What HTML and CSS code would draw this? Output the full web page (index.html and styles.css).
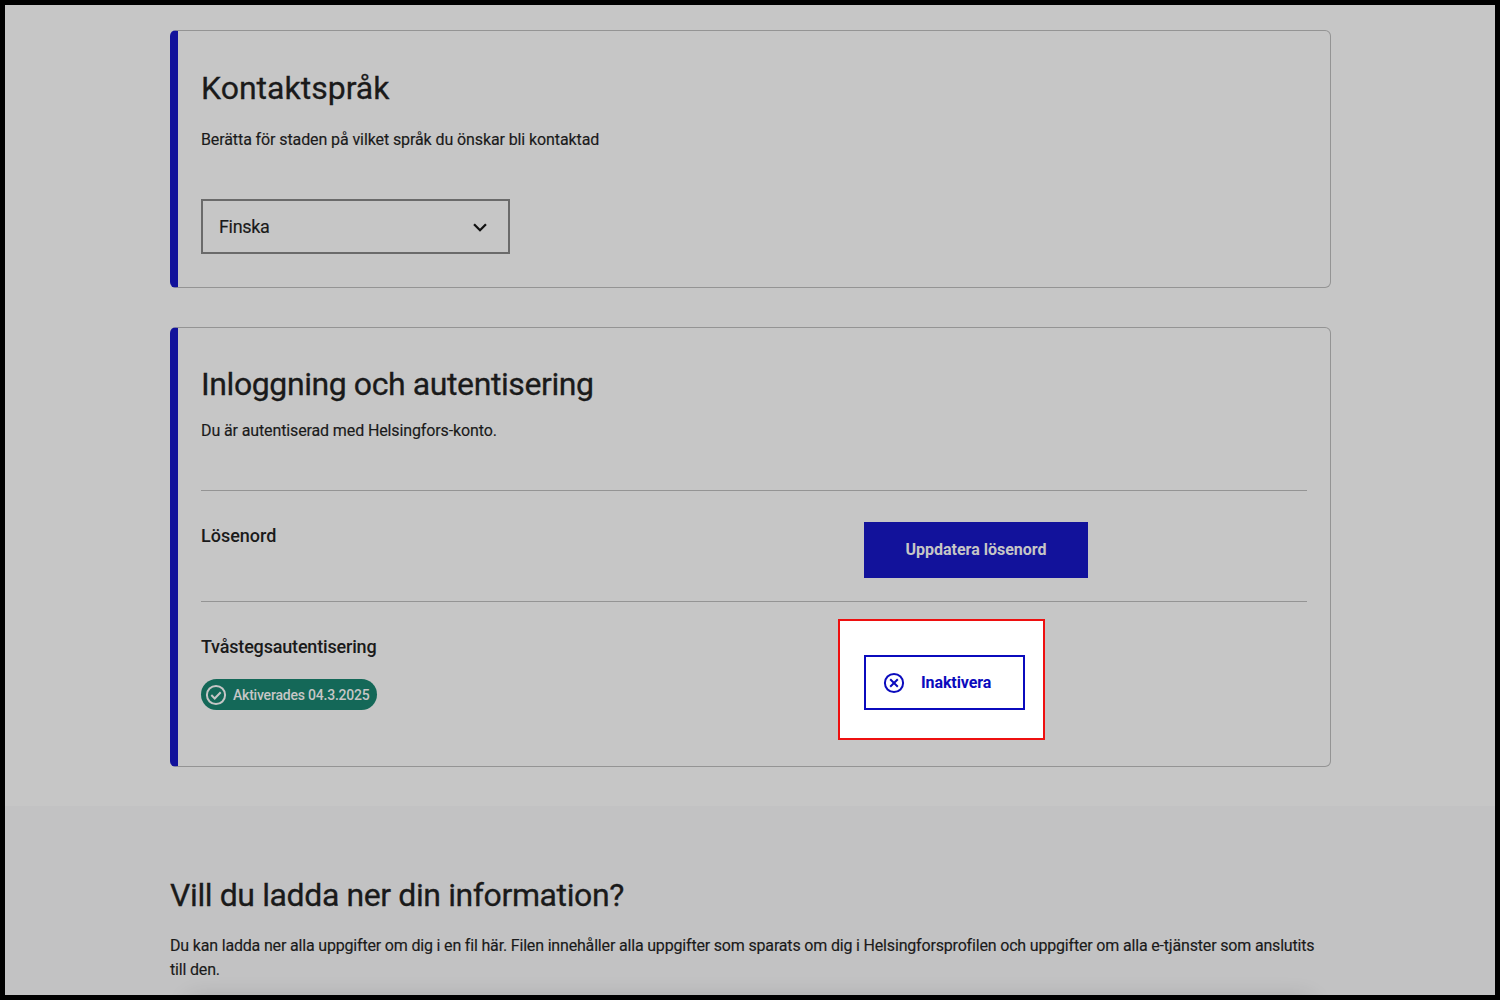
FILE: index.html
```html
<!DOCTYPE html>
<html lang="sv">
<head>
<meta charset="utf-8">
<title>Helsingforsprofil</title>
<link rel="stylesheet" href="styles.css">
</head>
<body>
<main class="profile">
  <section class="card card-language">
    <h2 class="title title-language">Kontaktspråk</h2>
    <p class="text text-language">Berätta för staden på vilket språk du önskar bli kontaktad</p>
    <div class="select" role="combobox" aria-expanded="false">
      <span class="select-value">Finska</span>
      <svg class="chevron" viewBox="0 0 24 24"><path d="M5.5 9l6.500 6.500L18.500 9"/></svg>
    </div>
  </section>
  <section class="card card-login">
    <h2 class="title title-login">Inloggning och autentisering</h2>
    <p class="text text-login">Du är autentiserad med Helsingfors-konto.</p>
    <div class="row">
      <h3 class="label label-password">Lösenord</h3>
      <div class="action"><button class="btn btn-primary"><span class="btn-update">Uppdatera lösenord</span></button></div>
    </div>
    <div class="row">
      <div>
        <h3 class="label label-twostep">Tvåstegsautentisering</h3>
        <div class="badge">
          <svg class="badge-icon" viewBox="0 0 22 22"><circle cx="11" cy="11" r="9.100"/><path d="M6.300 11l3.400 3.500 6-6.300"/></svg>
          <span class="badge-text">Aktiverades 04.3.2025</span>
        </div>
      </div>
      <div class="action action-highlight">
        <div class="highlight"></div>
        <button class="btn btn-secondary">
          <svg class="cancel-icon" viewBox="0 0 22 22"><circle cx="11" cy="11" r="9.100"/><path d="M7.200 7.200l7.600 7.600M14.800 7.200l-7.600 7.600"/></svg>
          <span class="btn-disable">Inaktivera</span>
        </button>
      </div>
    </div>
  </section>
</main>
<section class="download">
  <h2 class="title title-download">Vill du ladda ner din information?</h2>
  <p class="text text-download"><span class="line-first">Du kan ladda ner alla uppgifter om dig i en fil här. Filen innehåller alla uppgifter som sparats om dig i Helsingforsprofilen och uppgifter om alla e-tjänster som anslutits</span> <span class="line-last">till den.</span></p>
  <div class="sheet-shadow"></div>
</section>
</body>
</html>
```
FILE: styles.css
```css
* { box-sizing: border-box; }
body {
  margin: 0;
  width: 1500px;
  height: 1000px;
  border: 5px solid #000;
  background: #c6c6c6;
  color: #1a1a1a;
  font-family: Roboto, "Liberation Sans", sans-serif;
  overflow: hidden;
}
h2, h3, p { margin: 0; }
.profile {
  height: 801px;
  padding: 25px 0 0 165px;
  display: flex;
  flex-direction: column;
  gap: 39px;
}
.card {
  width: 1161px;
  border: 1px solid #949494;
  border-left: 8px solid #12129b;
  border-radius: 6px;
  padding: 37px 23px 0;
}
.card-language { height: 258px; }
.card-login { height: 440px; padding-top: 36px; }
.title {
  font-size: 32px;
  line-height: 40px;
  font-weight: 400;
  white-space: nowrap;
  -webkit-text-stroke: .3px currentColor;
}
.title-login { letter-spacing: -.41px; }
.title-download { letter-spacing: -.39px; }
.text {
  font-size: 16px;
  line-height: 24px;
  white-space: nowrap;
  -webkit-text-stroke: .15px currentColor;
}
.text-language { margin-top: 20px; letter-spacing: -.1px; }
.text-login { margin-top: 15px; letter-spacing: -.12px; }
.select {
  margin-top: 47px;
  width: 309px;
  height: 55px;
  border: 2px solid #6a6a6a;
  padding: 0 17px 0 16px;
  display: flex;
  align-items: center;
  justify-content: space-between;
  font-size: 18px;
  letter-spacing: -.35px;
  -webkit-text-stroke: .15px currentColor;
}
.chevron { width: 22px; height: 22px; fill: none; stroke: #111; stroke-width: 2.5; }
.row {
  display: grid;
  grid-template-columns: 663px 1fr;
  width: 1106px;
  height: 111px;
  border-top: 1px solid #949494;
  padding-top: 31px;
}
.text-login + .row { margin-top: 47px; }
.label { font-size: 18px; line-height: 24px; font-weight: 500; margin-top: 2px; white-space: nowrap; }
.label-twostep { letter-spacing: -.18px; }
.badge {
  margin-top: 20px;
  width: 176px;
  height: 31px;
  border-radius: 16px;
  background: #146858;
  color: #c6c6c6;
  display: flex;
  align-items: center;
  padding-left: 4px;
  gap: 6px;
  font-size: 14px;
  font-weight: 500;
  letter-spacing: -.21px;
  white-space: nowrap;
}
.badge-icon, .cancel-icon { width: 22px; height: 22px; fill: none; stroke: currentColor; stroke-width: 2; flex: none; }
.btn {
  font: 700 16px/24px Roboto, "Liberation Sans", sans-serif;
  border: 0;
  border-radius: 0;
  display: flex;
  align-items: center;
  white-space: nowrap;
}
.btn-primary {
  width: 224px;
  height: 56px;
  background: #12129b;
  color: #c6c6c6;
  justify-content: center;
  padding: 0;
}
.action-highlight { position: relative; padding-top: 22px; }
.highlight {
  position: absolute;
  left: -26px;
  top: -14px;
  width: 207px;
  height: 121px;
  border: 2px solid #ee1010;
  background: #fff;
}
.btn-secondary {
  position: relative;
  width: 161px;
  height: 55px;
  border: 2px solid #0b0bbd;
  background: #fff;
  color: #0b0bbd;
  padding: 1px 0 0 17px;
  gap: 16px;
}
.btn-disable { letter-spacing: -.1px; }
.download {
  position: relative;
  height: 189px;
  padding: 69px 0 0 165px;
  background: #c2c2c3;
  overflow: hidden;
}
.text-download {
  margin-top: 19px;
  display: flex;
  flex-direction: column;
  align-items: flex-start;
  letter-spacing: -.175px;
}
.sheet-shadow {
  position: absolute;
  left: 185px;
  top: 195px;
  width: 1120px;
  height: 20px;
  box-shadow: 0 0 24px rgba(0, 0, 0, .2);
}
```
